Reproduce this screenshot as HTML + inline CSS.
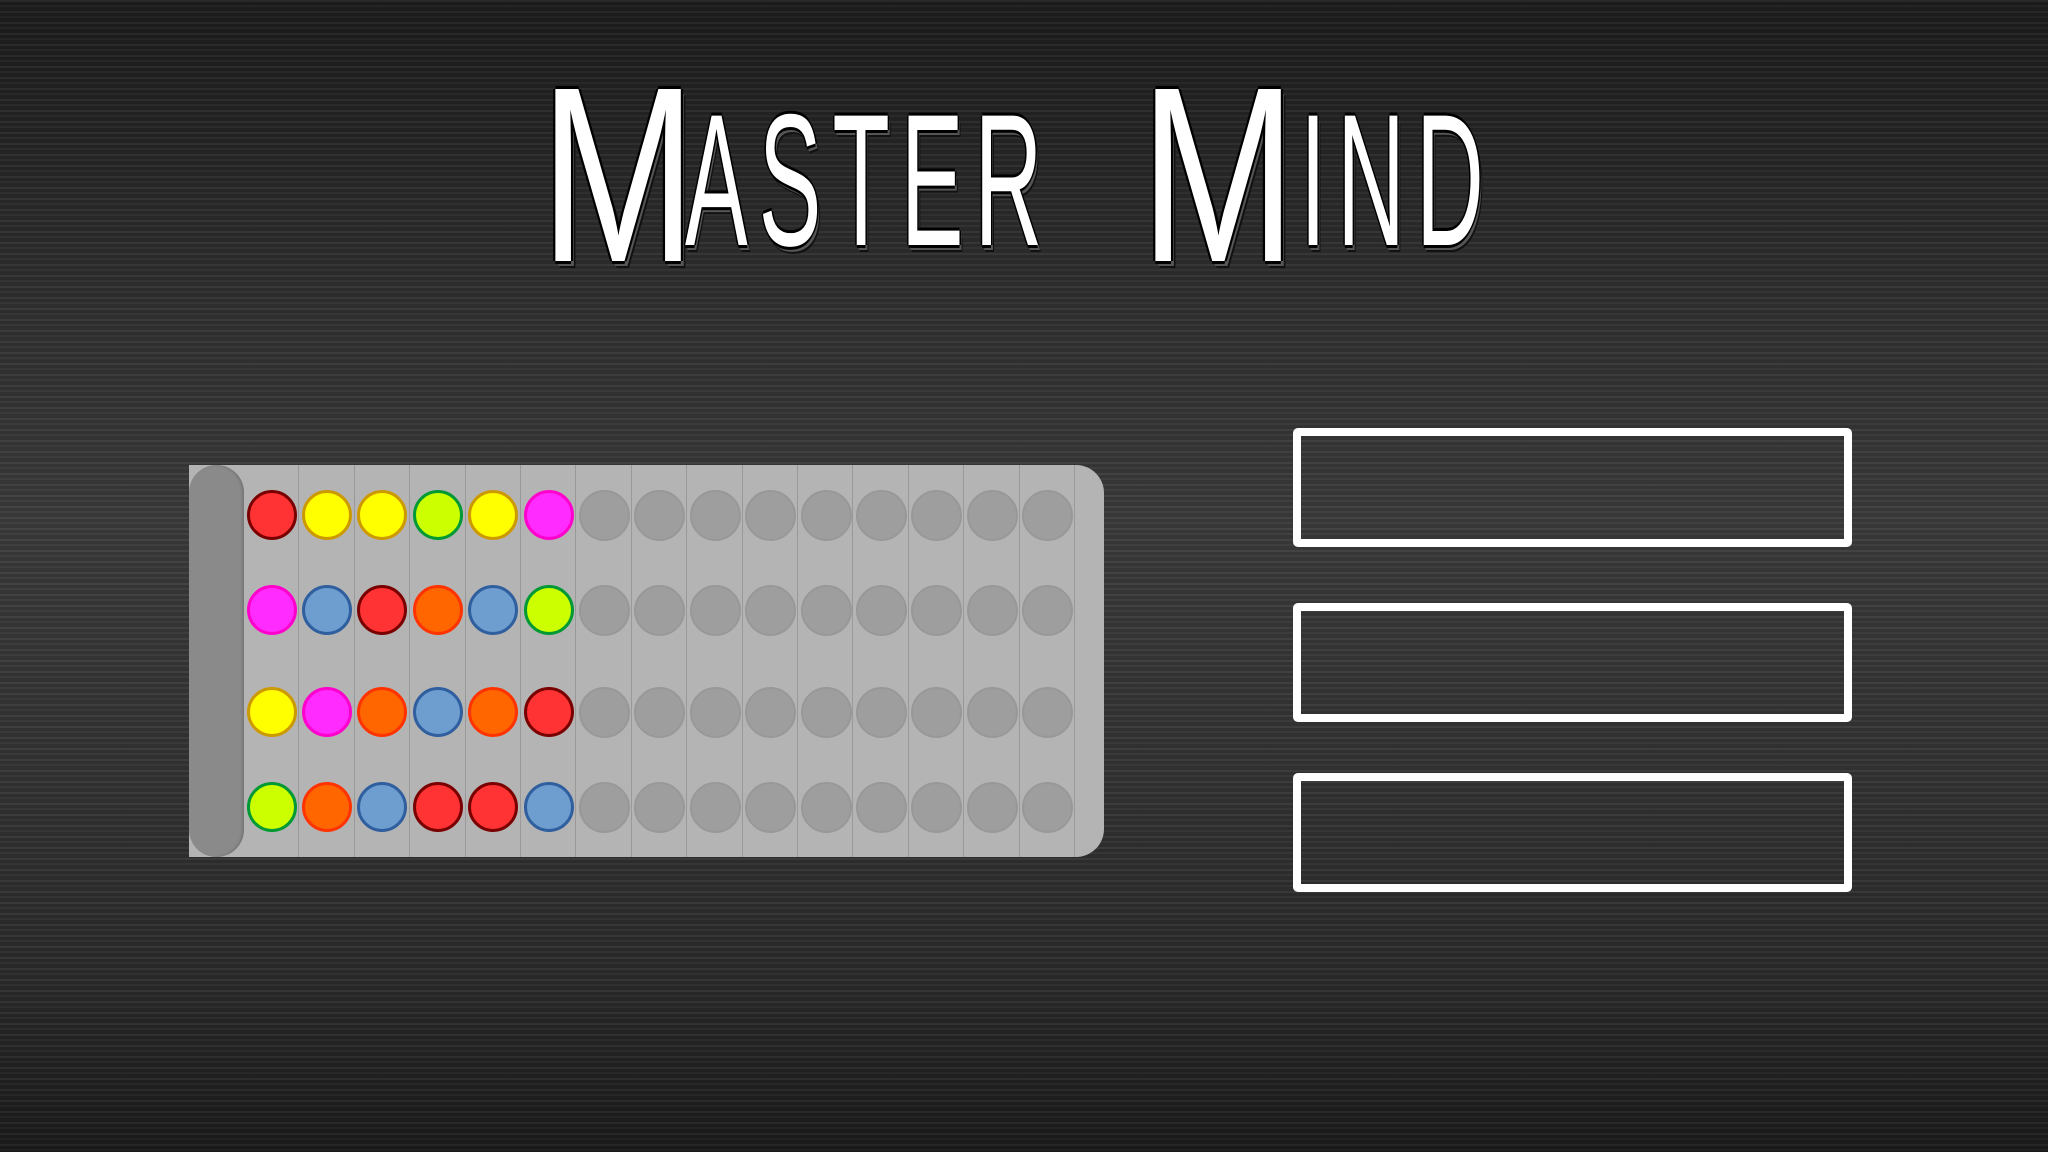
<!DOCTYPE html>
<html><head><meta charset="utf-8"><style>
html,body{margin:0;padding:0}
body{width:2048px;height:1152px;overflow:hidden;position:relative;
background:
repeating-linear-gradient(180deg,rgba(255,255,255,0.05) 0 2px,rgba(0,0,0,0.06) 2px 5px,rgba(255,255,255,0.03) 5px 7px,rgba(0,0,0,0.05) 7px 11px),
linear-gradient(180deg,#1c1c1c 0%,#2e2e2e 25%,#3a3a3a 45%,#333 65%,#2a2a2a 85%,#1a1a1a 100%);
font-family:"Liberation Sans",sans-serif}
.t{position:absolute;color:#fff;font-family:"Liberation Sans",sans-serif;line-height:1;white-space:nowrap;transform-origin:0 0;
text-shadow:-3px 0 0 #000,3px 0 0 #000,0 -3px 0 #000,0 3px 0 #000,4px 5px 0 #555,6px 7px 0 #111}
.board{position:absolute;left:189px;top:465px;width:915px;height:392px;background:#b4b4b4;border-radius:0 28px 28px 0}
.bar{position:absolute;left:189px;top:465px;width:55px;height:392px;background:#8a8a8a;border-radius:28px;box-shadow:inset -2px 0 2px #777}
.col{position:absolute;top:465px;width:1px;height:392px;background:#999}
.c{position:absolute;width:44px;height:44px;border-radius:50%;border:3.5px solid}
.g{background:#9e9e9e;border-color:#989898;border-width:2px;width:47px;height:47px}
.box{position:absolute;left:1293px;width:543px;height:103px;border:8px solid #fff;border-radius:5px}
</style></head><body>
<div class="t" style="left:540px;top:50px;font-size:250px;transform:scaleX(0.75)">M</div>
<div class="t" style="left:685px;top:86px;font-size:188px;letter-spacing:22px;transform:scaleX(0.5)">ASTER</div>
<div class="t" style="left:1140px;top:50px;font-size:250px;transform:scaleX(0.75)">M</div>
<div class="t" style="left:1300px;top:86px;font-size:188px;letter-spacing:22px;transform:scaleX(0.5)">IND</div>

<div class="board"></div>
<div class="bar"></div>
<div id="g"></div>

<div class="box" style="top:428px"></div>
<div class="box" style="top:603px"></div>
<div class="box" style="top:773px"></div>
<script>
var rows=[515,610,712,807];
var C={r:['#ff3333','#7a0000'],y:['#ffff00','#cc9900'],l:['#ccff00','#009933'],m:['#ff2bff','#ff00cc'],b:['#6e9ed0','#2f5f9e'],o:['#ff6600','#ff3300']};
var data=['ryylym','mbrobl','ymobor','lobrrb'];
var h='';
for(var i=1;i<=15;i++){h+='<div class="col" style="left:'+(244+i*55.4-1).toFixed(1)+'px"></div>';}
for(var r=0;r<4;r++){for(var k=0;k<15;k++){var cx=272+k*55.4,cy=rows[r];
if(k<6){var c=C[data[r][k]];h+='<div class="c" style="left:'+(cx-25.5).toFixed(1)+'px;top:'+(cy-25.5)+'px;background:'+c[0]+';border-color:'+c[1]+'"></div>';}
else h+='<div class="c g" style="left:'+(cx-25.5).toFixed(1)+'px;top:'+(cy-25.5)+'px"></div>';}}
document.getElementById('g').innerHTML=h;
</script>
</body></html>
